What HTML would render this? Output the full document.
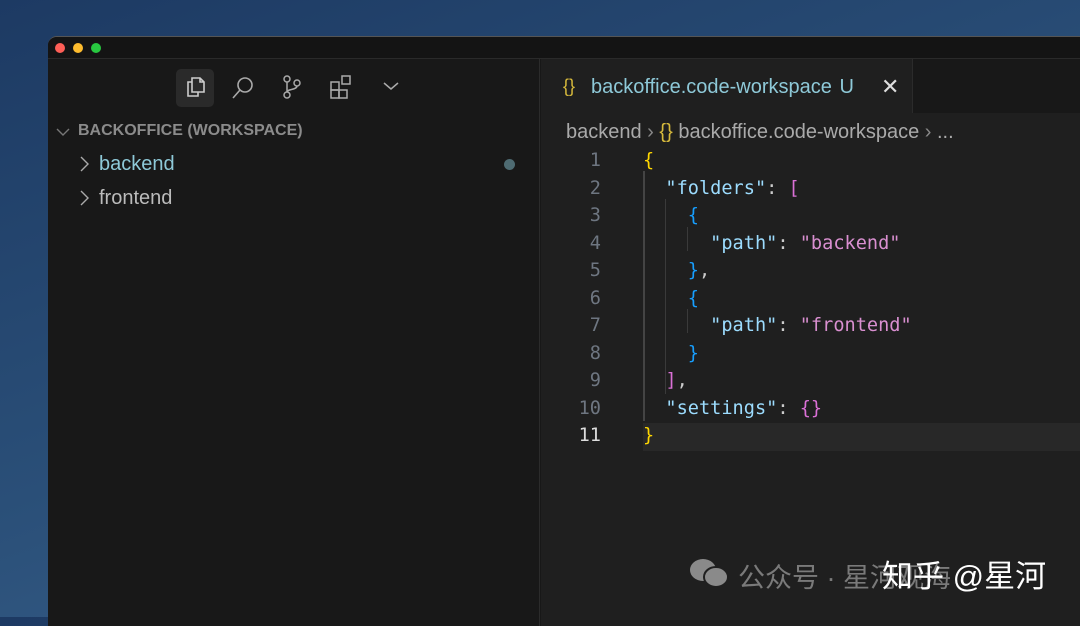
<!DOCTYPE html>
<html><head><meta charset="utf-8"><style>
*{margin:0;padding:0;box-sizing:border-box}
body{width:1080px;height:617px;overflow:hidden;background:linear-gradient(160deg,#1d3a63 0%,#2a4f78 50%,#3d6590 100%);font-family:"Liberation Sans",sans-serif;position:relative}
.win{position:absolute;left:48px;top:36px;width:1040px;height:590px;background:#181818;border-radius:9px 0 0 0;border-top:1px solid #555;overflow:hidden}
.title{height:22px;background:#141414;border-bottom:1px solid #2a2a2a;position:relative}
.dot{position:absolute;top:6px;width:10px;height:10px;border-radius:50%}
.side{position:absolute;left:0;top:22px;width:492px;bottom:0;background:#181818;border-right:1px solid #2b2b2b}
.ed{position:absolute;left:493px;top:22px;right:0;bottom:0;background:#1f1f1f}
.tabbar{height:54px;background:#181818;position:relative}
.tab{position:absolute;left:0;top:0;width:372px;height:54px;background:#1f1f1f;border-right:1px solid #2b2b2b}
.t{position:absolute;white-space:nowrap}
.mono{font-family:"DejaVu Sans Mono","Liberation Mono",monospace;font-size:18.6px}
.ln{position:absolute;width:60px;text-align:right;color:#6e7681;left:0}
.k{color:#9cdcfe}
</style></head><body>
<div class="win">
 <div class="title">
  <div class="dot" style="left:7px;background:#fe5f57"></div>
  <div class="dot" style="left:25px;background:#febc2e"></div>
  <div class="dot" style="left:43px;background:#28c840"></div>
 </div>
 <div class="side">
  <div style="position:absolute;left:128px;top:10px;width:38px;height:38px;background:#2a2a2a;border-radius:5px"></div>
  <svg style="position:absolute;left:134px;top:14px" width="28" height="28" viewBox="0 0 28 28" fill="none" stroke="#ccc" stroke-width="1.6"><path d="M10 5h8l4 4v10h-12z M18 5v4h4"/><path d="M10 9H6v14h10v-4"/></svg>
  <svg style="position:absolute;left:182px;top:16px" width="26" height="26" fill="none" stroke="#aaa" stroke-width="1.6"><circle cx="15" cy="10" r="7"/><path d="M10 15l-7 8"/></svg>
  <svg style="position:absolute;left:232px;top:14px" width="24" height="28" fill="none" stroke="#aaa" stroke-width="1.5"><circle cx="7" cy="6" r="3"/><circle cx="7" cy="22" r="3"/><circle cx="17" cy="10" r="3"/><path d="M7 9v10M17 13c0 4-10 3-10 6"/></svg>
  <svg style="position:absolute;left:280px;top:14px" width="28" height="28" fill="none" stroke="#aaa" stroke-width="1.5"><rect x="3" y="9" width="8" height="8"/><rect x="3" y="17" width="8" height="8"/><rect x="11" y="17" width="8" height="8"/><rect x="14" y="3" width="8" height="8"/></svg>
  <svg style="position:absolute;left:334px;top:20px" width="18" height="14" fill="none" stroke="#aaa" stroke-width="1.5"><path d="M2 4l7 6 7-6"/></svg>
  <svg style="position:absolute;left:8px;top:67px" width="14" height="12" fill="none" stroke="#777" stroke-width="1.4"><path d="M1 3l6 6 6-6"/></svg>
  <div class="t" style="left:30px;top:63px;font-size:16px;font-weight:bold;color:#8b8b8b">BACKOFFICE (WORKSPACE)</div>
  <svg style="position:absolute;left:30px;top:96px" width="12" height="18" fill="none" stroke="#aaa" stroke-width="1.4"><path d="M3 2l7 7-7 7"/></svg>
  <div class="t" style="left:51px;top:94px;font-size:20px;color:#8ec9d8">backend</div>
  <div style="position:absolute;left:456px;top:100px;width:11px;height:11px;border-radius:50%;background:#4e6b72"></div>
  <svg style="position:absolute;left:30px;top:130px" width="12" height="18" fill="none" stroke="#aaa" stroke-width="1.4"><path d="M3 2l7 7-7 7"/></svg>
  <div class="t" style="left:51px;top:128px;font-size:20px;color:#bbb">frontend</div>
 </div>
 <div class="ed">
  <div class="tabbar"><div class="tab">
   <div class="t" style="left:22px;top:17px;font-size:18px;color:#d7ba3c">{}</div>
   <div class="t" style="left:50px;top:17px;font-size:20px;color:#8ec9d8">backoffice.code-workspace <span style="margin-left:2px">U</span></div>
   <div class="t" style="left:340px;top:15px;font-size:22px;color:#ddd">✕</div>
  </div></div>
  <div class="t" style="left:25px;top:62px;font-size:20px;color:#aaa">backend <span style="color:#888">›</span> <span style="color:#d7ba3c">{}</span> backoffice.code-workspace <span style="color:#888">›</span> ...</div>
  <div style="position:absolute;left:102px;top:364px;right:0;height:28px;background:#282828"></div>
  <div style="position:absolute;left:102px;top:112px;width:2px;height:250px;background:#444"></div>
  <div style="position:absolute;left:124px;top:140px;width:1px;height:195px;background:#3a3a3a"></div>
  <div style="position:absolute;left:146px;top:168px;width:1px;height:24px;background:#3a3a3a"></div>
  <div style="position:absolute;left:146px;top:250px;width:1px;height:24px;background:#3a3a3a"></div>
  <div class="mono" style="position:absolute;left:0;top:88px;line-height:27.5px">
   <div style="position:relative;height:302px;width:600px">
    <div class="ln" style="top:0">1</div><div class="ln" style="top:27.5px">2</div><div class="ln" style="top:55px">3</div><div class="ln" style="top:82.5px">4</div><div class="ln" style="top:110px">5</div><div class="ln" style="top:137.5px">6</div><div class="ln" style="top:165px">7</div><div class="ln" style="top:192.5px">8</div><div class="ln" style="top:220px">9</div><div class="ln" style="top:247.5px">10</div><div class="ln" style="top:275px;color:#ddd">11</div>
    <pre class="mono" style="position:absolute;left:102px;top:0;line-height:27.5px;color:#ccc"><span style="color:#ffd700">{</span>
  <span class="k">"folders"</span>: <span style="color:#da70d6">[</span>
    <span style="color:#179fff">{</span>
      <span class="k">"path"</span>: <span style="color:#d98fd0">"backend"</span>
    <span style="color:#179fff">}</span>,
    <span style="color:#179fff">{</span>
      <span class="k">"path"</span>: <span style="color:#d98fd0">"frontend"</span>
    <span style="color:#179fff">}</span>
  <span style="color:#da70d6">]</span>,
  <span class="k">"settings"</span>: <span style="color:#da70d6">{}</span>
<span style="color:#ffd700">}</span></pre>
   </div>
  </div>
 </div>
</div>
<svg style="position:absolute;left:688px;top:556px" width="44" height="34"><ellipse cx="15" cy="14" rx="13" ry="11" fill="#8a8a8a"/><ellipse cx="28" cy="21" rx="12" ry="10" fill="#8a8a8a" stroke="#1f1f1f" stroke-width="2"/></svg>
<div class="t" style="left:738px;top:556px;font-size:27px;color:#7a7a7a;font-family:'Liberation Sans','Noto Sans CJK SC',sans-serif">公众号 · 星河观海</div>
<div class="t" style="left:882px;top:551px;font-size:31px;color:#fff;font-family:'Liberation Sans','Noto Sans CJK SC',sans-serif">知乎 @星河</div>
</body></html>
